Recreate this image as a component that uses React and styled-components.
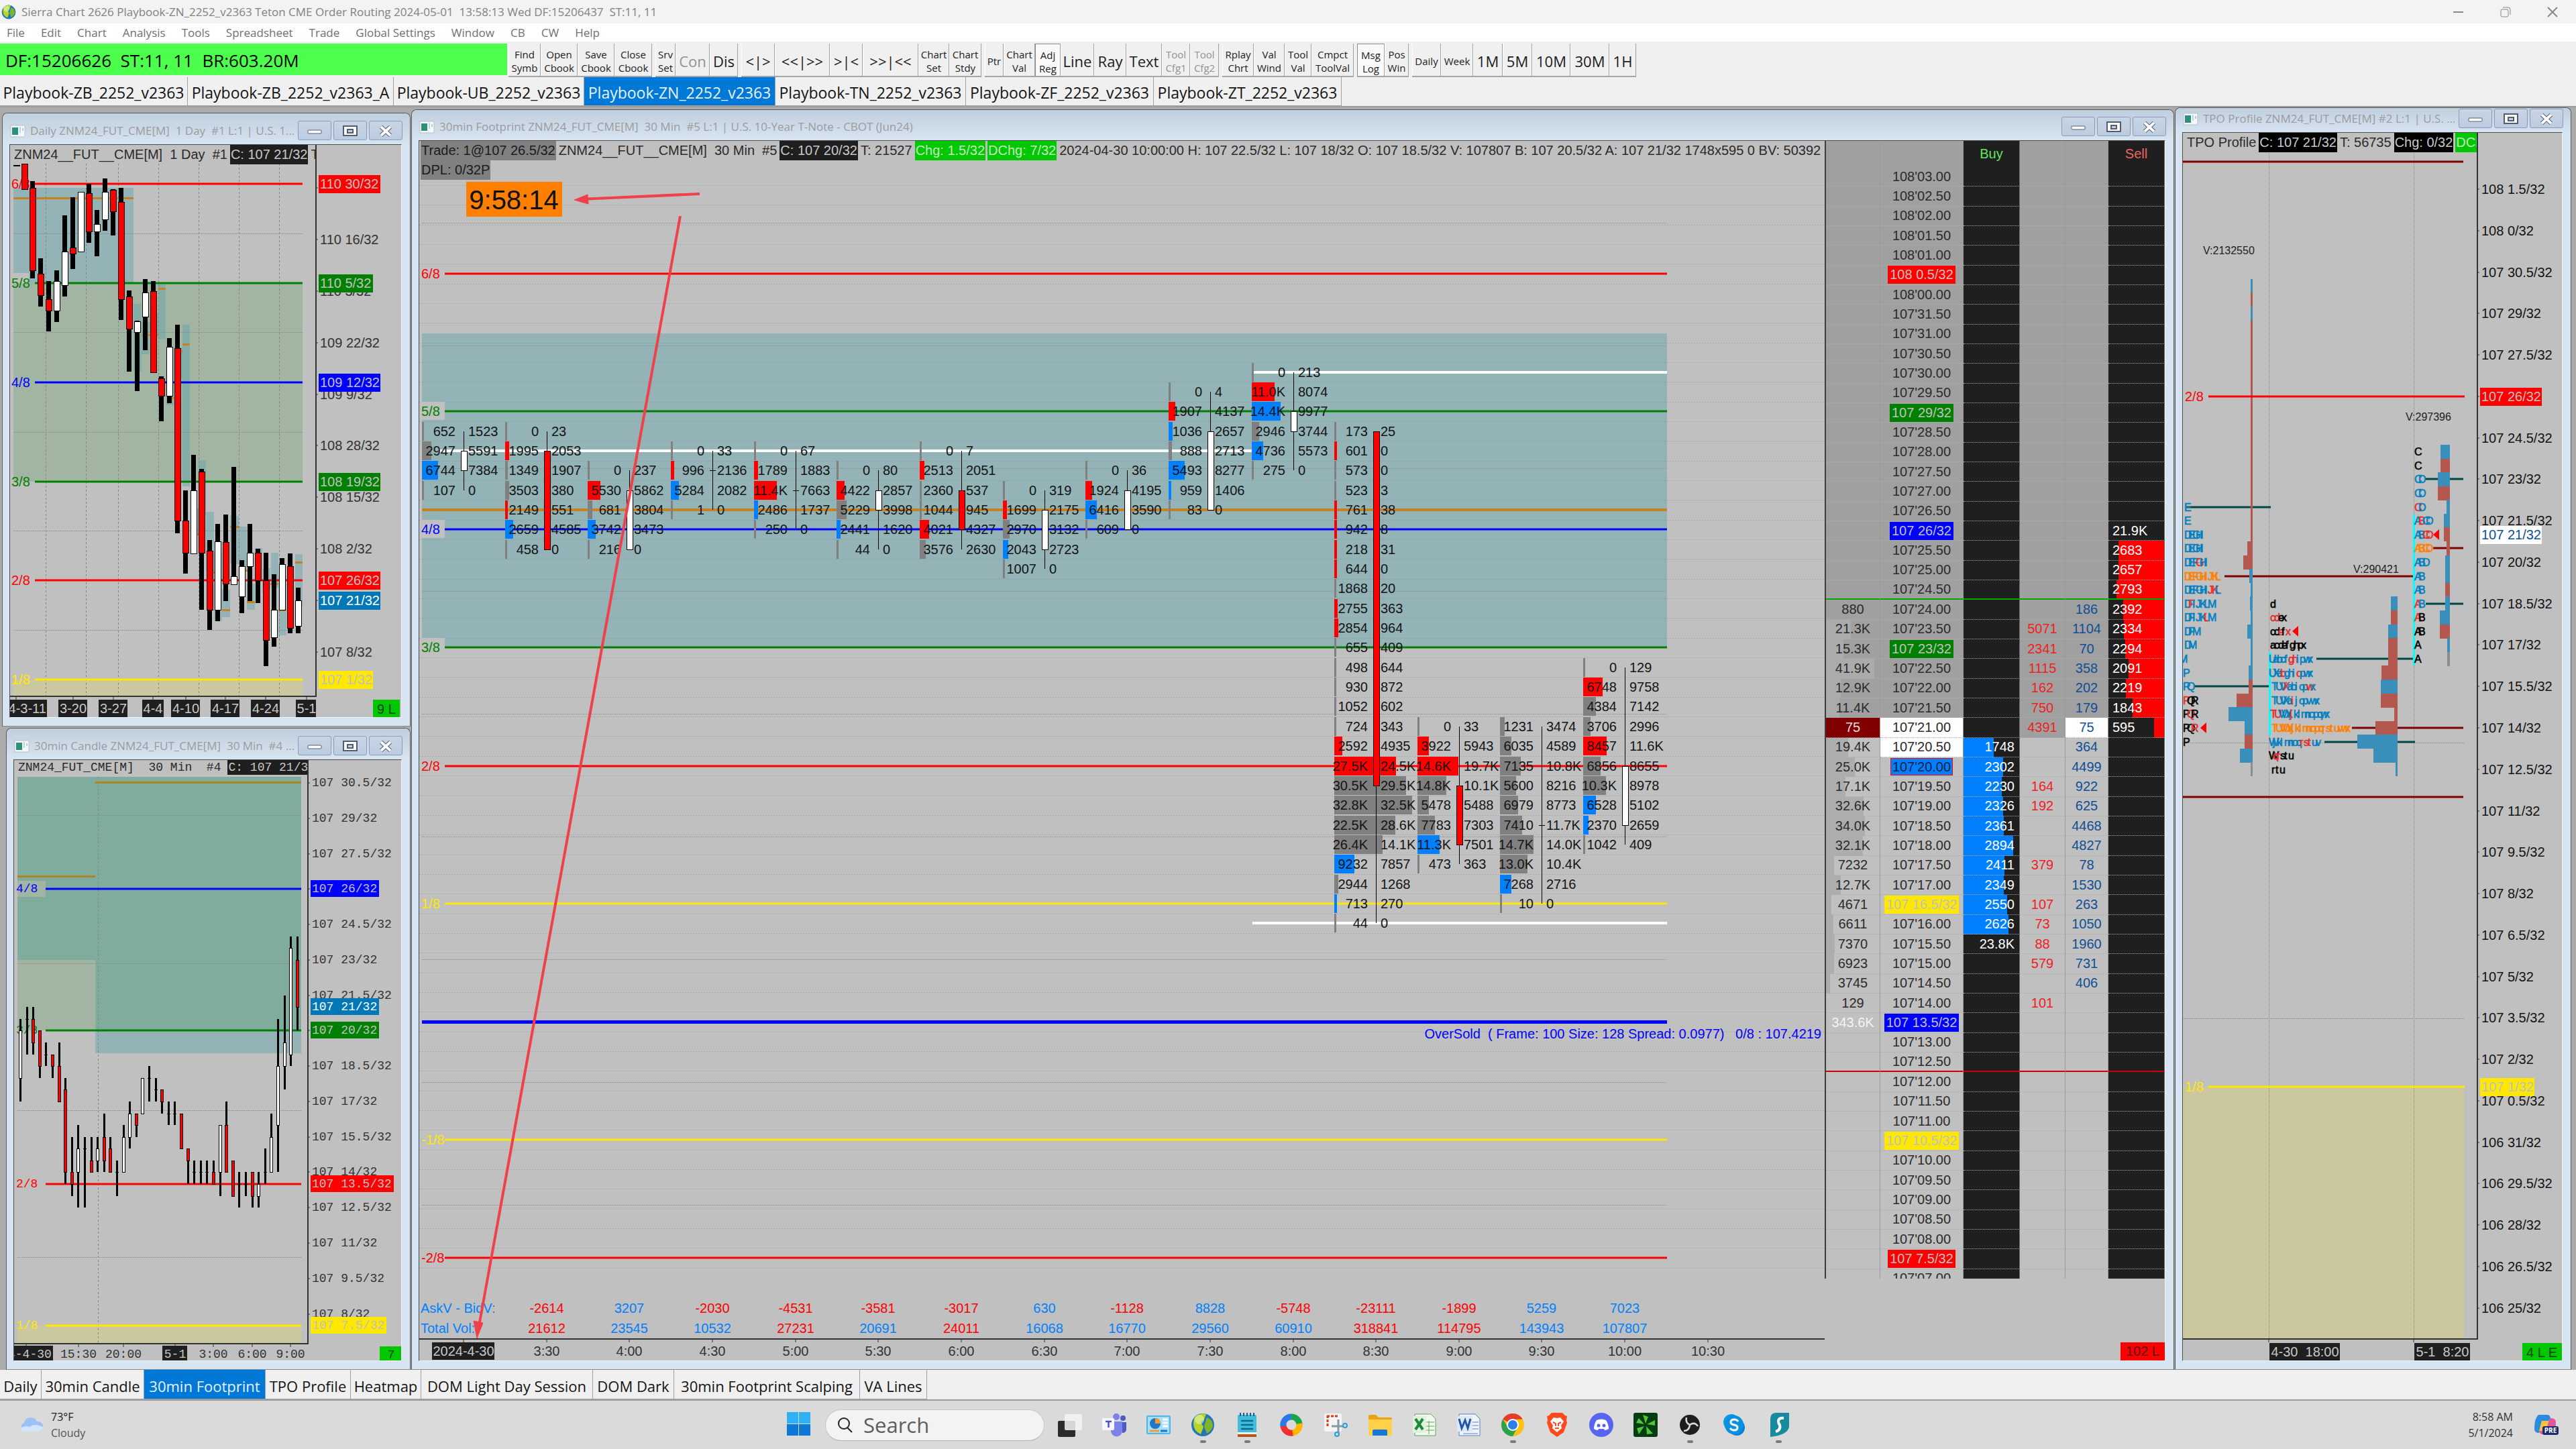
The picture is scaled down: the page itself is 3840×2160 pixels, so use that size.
import styled, { createGlobalStyle, css } from "styled-components";

const TEAL = "rgba(102, 166, 174, 0.5)";
const GREEN_ZONE = "#a2b5a2";
const YELLOW_ZONE = "#cbc79f";
const BAR_COLORS = { g: "#808080", r: "#ff0000", b: "#0080ff" };
const LEVEL = {
  red: "#ff0000",
  green: "#008000",
  blue: "#0000ff",
  yellow: "#ffe800",
};

// prices are kept in 32nds above 107
const fraction = (p) => {
  const whole = 107 + Math.floor(p / 32);
  return `${whole} ${p - (whole - 107) * 32}/32`;
};

const domPrice = (p) => {
  const whole = 107 + Math.floor(p / 32);
  return `${whole}'${(p - (whole - 107) * 32).toFixed(2).padStart(5, "0")}`;
};

const range = (count, from = 0, step = 1) =>
  Array.from({ length: count }, (_, i) => from + i * step);

const textWidth = (text, mono) =>
  mono
    ? Math.round(text.length * 11)
    : [...text].reduce((w, c) => w + (/[0-9A-Z]/.test(c) ? 11 : 6), 0);

/* ---------- data ---------- */

const MENU = [
  "File",
  "Edit",
  "Chart",
  "Analysis",
  "Tools",
  "Spreadsheet",
  "Trade",
  "Global Settings",
  "Window",
  "CB",
  "CW",
  "Help",
];

const TOOLBAR = [
  [
    ["Find\nSymb", 48],
    ["Open\nCbook", 55],
    ["Save\nCbook", 55],
    ["Close\nCbook", 56],
  ],
  [
    ["Srv\nSet", 30],
    ["Con", 51, "off"],
    ["Dis", 42],
  ],
  [
    ["<|>", 50],
    ["<<|>>", 82],
    [">|<", 49],
    [">>|<<", 83],
    ["Chart\nSet", 46],
    ["Chart\nStdy", 48],
  ],
  [
    ["Ptr", 28, "small"],
    ["Chart\nVal", 47],
    ["Adj\nReg", 38, "on"],
    ["Line", 50],
    ["Ray", 48],
    ["Text", 53],
    ["Tool\nCfg1", 42, "off"],
    ["Tool\nCfg2", 43, "off"],
  ],
  [
    ["Rplay\nChrt", 47],
    ["Val\nWind", 46],
    ["Tool\nVal", 40],
    ["Cmpct\nToolVal", 63],
  ],
  [
    ["Msg\nLog", 41, "on"],
    ["Pos\nWin", 36],
  ],
  [
    ["Daily", 43, "small"],
    ["Week", 48, "small"],
    ["1M", 44],
    ["5M", 44],
    ["10M", 57],
    ["30M", 58],
    ["1H", 40],
  ],
];

const BOOKS = [
  ["Playbook-ZB_2252_v2363", 280],
  ["Playbook-ZB_2252_v2363_A", 307],
  ["Playbook-UB_2252_v2363", 284],
  ["Playbook-ZN_2252_v2363", 285],
  ["Playbook-TN_2252_v2363", 284],
  ["Playbook-ZF_2252_v2363", 280],
  ["Playbook-ZT_2252_v2363", 280],
];

const SHEETS = [
  ["Daily", 62],
  ["30min Candle", 153],
  ["30min Footprint", 181],
  ["TPO Profile", 127],
  ["Heatmap", 105],
  ["DOM Light Day Session", 256],
  ["DOM Dark", 121],
  ["30min Footprint Scalping", 277],
  ["VA Lines", 100],
];

// [high, body top, body bottom, low, colour]
const DAILY = [
  [30, 30, 31, 31, "r"],
  [28, 28, 66, 66, "r"],
  [54, 64, 187, 199, "r"],
  [169, 192, 224, 241, "r"],
  [203, 230, 247, 278, "r"],
  [187, 203, 247, 264, "w"],
  [105, 159, 209, 226, "w"],
  [78, 153, 162, 185, "r"],
  [70, 70, 159, 160, "w"],
  [58, 72, 129, 146, "r"],
  [97, 118, 129, 166, "w"],
  [50, 70, 111, 128, "w"],
  [66, 67, 99, 135, "r"],
  [64, 85, 230, 261, "r"],
  [217, 226, 274, 338, "r"],
  [262, 263, 279, 367, "w"],
  [200, 220, 256, 306, "w"],
  [203, 218, 339, 339, "r"],
  [345, 348, 374, 412, "r"],
  [288, 301, 374, 385, "w"],
  [268, 303, 560, 579, "r"],
  [515, 560, 608, 639, "r"],
  [462, 515, 609, 609, "w"],
  [483, 487, 608, 693, "r"],
  [589, 605, 693, 723, "r"],
  [565, 591, 693, 710, "w"],
  [551, 592, 654, 680, "r"],
  [480, 643, 655, 656, "w"],
  [619, 628, 673, 698, "w"],
  [565, 608, 628, 680, "w"],
  [602, 608, 649, 683, "r"],
  [608, 649, 738, 777, "r"],
  [640, 693, 734, 748, "w"],
  [616, 625, 693, 693, "w"],
  [609, 628, 720, 728, "r"],
  [660, 679, 717, 728, "w"],
];

const DAILY_ZONES = [
  [5, 64, 23, 127],
  [28, 64, 156, 142],
  [184, 237, 12, 101],
  [196, 264, 12, 48],
  [208, 252, 13, 30],
  [221, 208, 11, 82],
  [233, 355, 11, 33],
  [244, 302, 13, 47],
  [257, 268, 11, 241],
  [273, 542, 8, 38],
  [281, 470, 11, 81],
  [292, 547, 12, 89],
  [304, 607, 12, 103],
  [316, 663, 12, 41],
  [328, 553, 13, 72],
  [341, 569, 12, 67],
  [353, 654, 12, 39],
  [365, 601, 11, 30],
  [376, 631, 12, 35],
  [389, 608, 11, 52],
  [400, 642, 12, 89],
  [425, 610, 11, 79],
];

const DAILY_MARKS = [
  [5, 79, 179],
  [196, 283, 25],
  [221, 214, 11],
  [239, 377, 6],
  [253, 307, 4],
  [257, 297, 11],
  [277, 580, 4],
  [288, 493, 4],
  [300, 637, 5],
  [316, 693, 12],
  [328, 569, 13],
  [348, 634, 6],
  [353, 681, 12],
  [388, 654, 12],
  [400, 693, 12],
  [425, 622, 11],
];

const CANDLES = [
  [20.5, 20, 18, 17, "w"],
  [21, 20.5, 20.5, 19],
  [21, 20.5, 19.5, 19, "r"],
  [20, 20, 18.5, 18, "r"],
  [19.5, 19, 19, 18.5],
  [19, 19, 18.5, 18, "r"],
  [19.5, 18.5, 17, 17, "r"],
  [18, 17.5, 14, 13.5, "r"],
  [15.5, 14, 13.5, 13, "r"],
  [16, 15, 14, 12.5, "w"],
  [15.5, 15, 15, 12.5],
  [15.5, 14.5, 14, 14, "r"],
  [15.5, 15, 14.5, 14, "w"],
  [16.5, 15.5, 14.5, 14, "r"],
  [15.5, 15, 14, 14, "r"],
  [14.5, 14, 14, 13],
  [16, 15.5, 14, 14, "w"],
  [17, 16.5, 15.5, 15, "w"],
  [16.5, 16.5, 16, 15.5, "r"],
  [18, 18, 16.5, 16.5, "w"],
  [18.5, 18, 18, 17],
  [18, 17.5, 17.5, 17],
  [17.5, 17.5, 17, 16.5, "r"],
  [17, 16.5, 16.5, 16],
  [17, 16.5, 16.5, 16],
  [16.5, 16.5, 15, 15, "r"],
  [15, 15, 14.5, 13.5, "r"],
  [14.5, 14, 14, 13.5],
  [14.5, 14, 14, 13.5],
  [14.5, 14, 14, 13.5],
  [14.5, 14, 13.5, 13.5, "r"],
  [16, 16, 14, 13, "w"],
  [17, 16, 14, 14, "r"],
  [14.5, 14.5, 13, 13, "r"],
  [14, 13.5, 13.5, 12.5],
  [14, 13.5, 13.5, 13],
  [14, 14, 13, 12.5, "r"],
  [14, 13.5, 13, 12.5, "w"],
  [15, 14, 14, 13.5],
  [16.5, 15.5, 14, 14, "w"],
  [20.5, 18.5, 16, 14, "w"],
  [21.5, 19.5, 18.5, 17.5, "w"],
  [24, 23.5, 19, 18.5, "w"],
  [24, 23, 21, 20, "r"],
];

// each row: "bid ask colour width"
const FOOTPRINT = [
  {
    time: "",
    top: 28.5,
    body: [28, 27.5, "w"],
    rows: ["652 1523", "2947 5591 g 14", "6744 7384 b 24", "107 0"],
  },
  {
    time: "3:30",
    delta: -2614,
    vol: "21612",
    top: 28.5,
    body: [28, 25.5, "r"],
    rows: [
      "0 23",
      "1995 2053 r 6",
      "1349 1907 g 4",
      "3503 380 g 6",
      "2149 551 r 4",
      "2659 4585 b 12",
      "458 0",
    ],
  },
  {
    time: "4:00",
    delta: 3207,
    vol: "23545",
    top: 27.5,
    body: [27, 25.5, "w"],
    rows: ["0 237", "5530 5862 r 19", "681 3804 g 7", "3742 3473 b 12", "216 0"],
  },
  {
    time: "4:30",
    delta: -2030,
    vol: "10532",
    volUp: true,
    top: 28,
    body: [27.5, 27.5],
    rows: ["0 33", "996 2136 r 5", "5284 2082 b 12", "1 0"],
  },
  {
    time: "5:00",
    delta: -4531,
    vol: "27231",
    top: 28,
    body: [27, 27],
    rows: ["0 67", "1789 1883 r 6", "11.4K 7663 r 34", "2486 1737 b 6", "250 0"],
  },
  {
    time: "5:30",
    delta: -3581,
    vol: "20691",
    volUp: true,
    top: 27.5,
    body: [27, 26.5, "w"],
    rows: ["0 80", "4422 2857 r 12", "5229 3998 g 15", "2441 1620 b 6", "44 0"],
  },
  {
    time: "6:00",
    delta: -3017,
    vol: "24011",
    top: 28,
    body: [27, 26, "r"],
    rows: [
      "0 7",
      "2513 2051 r 7",
      "2360 537",
      "1044 945",
      "4021 4327 r 14",
      "3576 2630 g 9",
    ],
  },
  {
    time: "6:30",
    delta: 630,
    vol: "16068",
    top: 27,
    body: [26.5, 25.5, "w"],
    rows: ["0 319", "1699 2175 r 6", "2970 3132 g 10", "2043 2723 b 8", "1007 0"],
  },
  {
    time: "7:00",
    delta: -1128,
    vol: "16770",
    volUp: true,
    top: 27.5,
    body: [27, 26, "w"],
    rows: ["0 36", "1924 4195 r 10", "6416 3590 b 17", "609 0"],
  },
  {
    time: "7:30",
    delta: 8828,
    vol: "29560",
    top: 29.5,
    body: [28.5, 26.5, "w"],
    rows: [
      "0 4",
      "1907 4137 r 10",
      "1036 2657 b 6",
      "888 2713 g 5",
      "5493 8277 b 24",
      "959 1406 b 4",
      "83 0",
    ],
  },
  {
    time: "8:00",
    delta: -5748,
    vol: "60910",
    volUp: true,
    top: 30,
    body: [29, 28.5, "w"],
    rows: [
      "0 213",
      "11.0K 8074 r 34",
      "14.4K 9977 b 43",
      "2946 3744 g 11",
      "4736 5573 b 17",
      "275 0",
    ],
  },
  {
    time: "8:30",
    delta: -23111,
    vol: "318841",
    top: 28.5,
    body: [28.5, 19.5, "r"],
    rows: [
      "173 25",
      "601 0 r 4",
      "573 0",
      "523 3",
      "761 38 r 4",
      "942 8 r 4",
      "218 31 r 4",
      "644 0 r 4",
      "1868 20",
      "2755 363 r 5",
      "2854 964 r 6",
      "655 409",
      "498 644",
      "930 872",
      "1052 602",
      "724 343",
      "2592 4935 r 12",
      "27.5K 24.5K r 92",
      "30.5K 29.5K g 107",
      "32.8K 32.5K g 116",
      "22.5K 28.6K g 91",
      "26.4K 14.1K g 72",
      "9232 7857 b 30",
      "2944 1268 g 6",
      "713 270 b 4",
      "44 0",
    ],
  },
  {
    time: "9:00",
    delta: -1899,
    vol: "114795",
    top: 21,
    body: [19.5, 18, "r"],
    rows: [
      "0 33",
      "3922 5943 r 17",
      "14.6K 19.7K r 61",
      "14.8K 10.1K g 43",
      "5478 5488 g 17",
      "7783 7303 g 26",
      "11.3K 7501 b 33",
      "473 363",
    ],
  },
  {
    time: "9:30",
    delta: 5259,
    vol: "143943",
    top: 21,
    body: [18.5, 18.5],
    rows: [
      "1231 3474 g 7",
      "6035 4589 g 17",
      "7135 10.8K g 31",
      "5600 8216 g 24",
      "6979 8773 g 27",
      "7410 11.7K g 33",
      "14.7K 14.0K g 50",
      "13.0K 10.4K g 41",
      "7268 2716 b 17",
      "10 0",
    ],
  },
  {
    time: "10:00",
    delta: 7023,
    vol: "107807",
    top: 22.5,
    body: [20, 18.5, "w"],
    rows: [
      "0 129",
      "6748 9758 r 29",
      "4384 7142 g 19",
      "3706 2996 g 11",
      "8457 11.6K r 35",
      "6856 8655 g 26",
      "10.3K 8978 g 34",
      "6528 5102 b 19",
      "2370 2659 b 8",
      "1042 409",
    ],
  },
];

const MURREY = [
  ["6/8", 32.5, "red"],
  ["5/8", 29, "green"],
  ["4/8", 26, "blue"],
  ["3/8", 23, "green"],
  ["2/8", 20, "red"],
  ["1/8", 16.5, "yellow"],
  ["-1/8", 10.5, "yellow"],
  ["-2/8", 7.5, "red"],
];

const DOM_TAGS = {
  32.5: "red",
  29: "green",
  26: "blue",
  23: "green",
  16.5: "yellow",
  13.5: "blue",
  10.5: "yellow",
  7.5: "red",
};

// price: [volume, buy, bid traded, ask traded, sell]
const DOM = {
  26: ["", "", "", "", "21.9K"],
  25.5: ["", "", "", "", "2683"],
  25: ["", "", "", "", "2657"],
  24.5: ["", "", "", "", "2793"],
  24: ["880", "", "", "186", "2392"],
  23.5: ["21.3K", "", "5071", "1104", "2334"],
  23: ["15.3K", "", "2341", "70", "2294"],
  22.5: ["41.9K", "", "1115", "358", "2091"],
  22: ["12.9K", "", "162", "202", "2219"],
  21.5: ["11.4K", "", "750", "179", "1843"],
  21: ["75", "", "4391", "75", "595"],
  20.5: ["19.4K", "1748", "", "364", ""],
  20: ["25.0K", "2302", "", "4499", ""],
  19.5: ["17.1K", "2230", "164", "922", ""],
  19: ["32.6K", "2326", "192", "625", ""],
  18.5: ["34.0K", "2361", "", "4468", ""],
  18: ["32.1K", "2894", "", "4827", ""],
  17.5: ["7232", "2411", "379", "78", ""],
  17: ["12.7K", "2349", "", "1530", ""],
  16.5: ["4671", "2550", "107", "263", ""],
  16: ["6611", "2626", "73", "1050", ""],
  15.5: ["7370", "23.8K", "88", "1960", ""],
  15: ["6923", "", "579", "731", ""],
  14.5: ["3745", "", "", "406", ""],
  14: ["129", "", "101", "", ""],
  13.5: ["343.6K", "", "", "", ""],
};

const TPO_COLORS = { k: "#000000", b: "#0080c0", r: "#e03030", o: "#ff8000" };

// x, price, letters, colour of each letter
const TPO_ROWS = [
  [2, 22, "E", "b"],
  [2, 21.5, "E", "b"],
  [2, 21, "DEGHI", "bbbbb"],
  [2, 20.5, "DEGHI", "bbbbb"],
  [2, 20, "DEFGHI", "bbbrbb"],
  [2, 19.5, "DEFGHIJKL", "ooooooooo"],
  [2, 19, "DEFGHIJKL", "bbbbbbrrb"],
  [2, 18.5, "DFIJKLM", "brbbbbb"],
  [2, 18, "DFIJKLM", "bbbbbrb"],
  [2, 17.5, "DFM", "bbb"],
  [2, 17, "DM", "bb"],
  [-6, 16.5, "M", "b"],
  [0, 16, "P", "b"],
  [0, 15.5, "RQ", "bb"],
  [0, 15, "PQR", "rkk"],
  [0, 14.5, "PQR", "krk"],
  [0, 14, "PQR", "kkr"],
  [0, 13.5, "P", "k"],
  [130, 18.5, "d", "k"],
  [130, 18, "cdex", "rrkk"],
  [130, 17.5, "cdefx", "kkrkr"],
  [130, 17, "acdefghpx", "kkkkkkkkk"],
  [128, 16.5, "Uabcfghipwx", "bbbbbrrbbbb"],
  [128, 16, "UXabghiopwx", "bbbrbbbrbbb"],
  [132, 15.5, "TUVXabiopwx", "bbbrbbbbbrb"],
  [132, 15, "TUVXaijopvwx", "bbbbbrbbbbbb"],
  [130, 14.5, "TUVWXjklmnopqwx", "rrbbbrbbbbbbbbb"],
  [132, 14, "TUVWXjklmnopqrstuvwx", "oooooooooooooooooooo"],
  [128, 13.5, "Wjklmnoqrstuv", "bbbbbbbbrrrbb"],
  [128, 13, "Wqrstu", "krrkkk"],
  [132, 12.5, "rtu", "kkk"],
  [345, 24, "C", "k"],
  [345, 23.5, "C", "k"],
  [345, 23, "CD", "bb"],
  [345, 22.5, "CD", "bb"],
  [345, 22, "CD", "rb"],
  [345, 21.5, "ABCD", "brbb"],
  [345, 21, "ABCD", "bbrr"],
  [345, 20.5, "ABCD", "oooo"],
  [345, 20, "ABD", "bbb"],
  [345, 19.5, "AB", "bb"],
  [345, 19, "AB", "bb"],
  [345, 18.5, "AB", "rb"],
  [345, 18, "AB", "rk"],
  [345, 17.5, "AB", "kk"],
  [345, 17, "A", "k"],
  [345, 16.5, "A", "k"],
];

const PROFILES = [
  {
    right: 104,
    top: 30,
    rows:
      "b3 r3 b3 r3 r3 r3 r3 r3 r3 r3 r3 r3 r3 r3 r3 r3 r3 r3 r3 r8 r14 b5 b3 b4 b3 b8 b3 b3 b6 r6 r24 b36 b12 r12 b19 g3",
  },
  {
    right: 320,
    top: 18.5,
    rows: "b10 r10 b14 r14 r14 r24 b25 r25 r5 r33 b60 b36 b3",
  },
  {
    right: 398,
    top: 24,
    rows: "b14 r14 b18 r18 b5 b9 r9 r5 b7 b7 r7 b7 b15 r15 b4 g4",
  },
];

/* ---------- styled parts ---------- */

const GlobalStyle = createGlobalStyle`
  * {
    box-sizing: border-box;
  }
  body {
    margin: 0;
    background: #ababab;
    font-family: "Open Sans", sans-serif;
  }
  button {
    font: inherit;
    color: inherit;
    padding: 0;
    border: none;
    background: none;
  }
`;

const Screen = styled.div`
  display: flex;
  flex-direction: column;
  min-height: 100vh;
  overflow: hidden;
`;

const TitleBar = styled.header`
  display: flex;
  align-items: center;
  height: 35px;
  padding: 0 24px 0 2px;
  gap: 8px;
  background: #f3f3f3;
  color: #828282;
  font-size: 17px;
  white-space: pre;
`;

const WindowKeys = styled.div`
  display: flex;
  gap: 48px;
  margin-left: auto;

  button {
    width: 22px;
    height: 20px;
  }
`;

const MenuBar = styled.nav`
  display: flex;
  align-items: center;
  height: 27px;
  padding-left: 10px;
  gap: 24px;
  background: #ffffff;
  color: #6f6f6f;
  font-size: 17px;
  line-height: 24px;
`;

const ToolBar = styled.div`
  display: flex;
  height: 53px;
  padding-top: 3px;
  gap: 5px;
  background: #f0f0f0;
`;

const Status = styled.div`
  width: 756px;
  height: 47px;
  margin-right: -3px;
  padding-left: 8px;
  background: #4dff4d;
  font-size: 26px;
  line-height: 50px;
  white-space: pre;
`;

const ToolGroup = styled.div`
  display: flex;
  height: 50px;
  border-bottom: 2px solid #a5a5a5;
`;

const ToolButton = styled.button`
  width: ${({ $width }) => $width}px;
  padding-top: 4px;
  border-right: 1px solid #a0a0a0;
  border-left: 1px solid #ffffff;
  white-space: pre;
  text-align: center;
  font-size: ${({ $size }) => $size}px;
  line-height: 20px;
  color: ${({ $state }) => ($state === "off" ? "#929292" : "#1c1c1c")};
  ${({ $state }) =>
    $state === "on" &&
    css`
      background: #f9f9f9;
      border-top: 1px solid #8c8c8c;
      border-left-color: #8c8c8c;
    `}
`;

const TabStrip = styled.nav`
  display: flex;
  flex: none;
  height: ${({ $height }) => $height}px;
  background: #f0f0f0;
  border-bottom: 2px solid #9c9c9c;
`;

const Tab = styled.button`
  width: ${({ $width }) => $width}px;
  padding-top: 4px;
  font-size: ${({ $size }) => $size || 23}px;
  white-space: nowrap;
  border-right: 1px solid #a0a0a0;
  border-bottom: 1px solid #a0a0a0;
  background: ${({ $active }) => ($active ? "#0078d7" : "#f0f0f0")};
  color: ${({ $active }) => ($active ? "#e8f2fc" : "#141414")};
`;

const Desktop = styled.main`
  flex: 1;
  display: grid;
  grid-template-columns: 612px minmax(0, 1fr) 591px;
  padding-right: 7px;
  min-height: 0;
  background: #ababab;
`;

const LeftStack = styled.div`
  display: grid;
  grid-template-rows: 915fr 957fr;
  gap: 2px;
  padding-top: 8px;
`;

const Frame = styled.section`
  display: flex;
  flex-direction: column;
  margin: ${({ $margin }) => $margin};
  padding: 0 12px 12px 10px;
  min-width: 0;
  background: #d7e4f2;
  border: 1px solid #5a5a5a;
  border-bottom-color: #8a8a8a;
  border-radius: 8px 8px 0 0;
`;

const FrameTitle = styled.div`
  display: flex;
  align-items: flex-end;
  height: ${({ $height }) => $height}px;
  margin: 0 -12px 0 -10px;
  padding: 0 14px 6px 11px;
  gap: 6px;
  border-radius: 8px 8px 0 0;
  background: linear-gradient(#c0cfdd, #d7e4f2);
  color: #9b9b9b;
  font-size: 17px;
  line-height: 28px;
  white-space: pre;

  h2 {
    flex: 1;
    min-width: 0;
    margin: 0;
    overflow: hidden;
    font: inherit;
  }
  svg {
    display: block;
  }
`;

const FrameKey = styled.button`
  width: 50px;
  height: 29px;
  margin-right: -3px;
  border: 1px solid #8b9cb8;
  border-radius: 3px;
  background: linear-gradient(#c7d5e5, #bccce0);

  svg {
    margin: auto;
  }
`;

const Client = styled.div`
  flex: 1;
  display: grid;
  grid-template-columns: ${({ $columns }) => $columns || "minmax(0, 1fr)"};
  grid-template-rows: minmax(0, 1fr);
  min-height: 0;
  overflow: hidden;
  background: #c0c0c0;
  border: 1px solid #4c4c4c;
  border-right-color: #eef3f8;
  border-bottom-color: #eef3f8;
`;

const Plot = styled.svg`
  grid-area: 1 / 1;
  display: block;
  width: 100%;
  height: 100%;
  font-family: ${({ $mono }) =>
    $mono
      ? '"Liberation Mono", monospace'
      : '"Liberation Sans", Arial, sans-serif'};
  font-size: ${({ $mono }) => ($mono ? 18 : 20)}px;

  text {
    dominant-baseline: central;
    white-space: pre;
  }
`;

const ChartHeader = styled.div`
  grid-area: 1 / 1;
  align-self: start;
  width: ${({ $width }) => $width};
  padding-left: ${({ $pad }) => $pad}px;
  overflow: hidden;
  white-space: pre;
  color: #2b2b2b;
  font-family: ${({ $mono }) =>
    $mono
      ? '"Liberation Mono", monospace'
      : '"Liberation Sans", Arial, sans-serif'};
  font-size: ${({ $mono }) => ($mono ? 18 : 20)}px;
  line-height: ${({ $mono }) => ($mono ? 22 : 29)}px;
`;

const HeaderLine = styled.div`
  display: flex;
  gap: ${({ $gap }) => $gap || 3}px;
`;

const Chip = styled.span`
  flex: none;
  padding: 0 1px;
  background: ${({ $bg }) => $bg || "none"};
  color: ${({ $color }) => $color || "inherit"};
`;

const LadderPane = styled.div`
  display: flex;
  flex-direction: column;
  min-height: 0;
  overflow: hidden;
`;

const LadderClip = styled.div`
  height: 1696px;
  overflow: hidden;
  border-left: 2px solid #3c3c3c;
`;

const Ladder = styled.table`
  display: block;
  font-family: "Liberation Sans", Arial, sans-serif;
  font-size: 20px;
  line-height: 27px;
  color: #2b2b2b;

  thead {
    display: block;
    height: 39px;
  }
  tbody {
    display: grid;
    grid-template-rows: repeat(57, minmax(0, 1fr));
    height: 1672px;
  }
`;

const LadderRow = styled.tr`
  display: grid;
  grid-template-columns: 81px 124px 84px 68px 64px 84px;
  height: 100%;
  background: ${({ $upper }) => ($upper ? "#a0a0a0" : "#c0c0c0")};
  ${({ $rule }) =>
    $rule &&
    css`
      td {
        border-bottom: 3px solid ${$rule};
      }
    `}
`;

const Cell = styled.td`
  display: flex;
  align-items: center;
  justify-content: ${({ $align }) => $align || "center"};
  padding: ${({ $pad }) => $pad || 0};
  color: ${({ $color }) => $color || "inherit"};
  border-bottom: 1px dotted ${({ $dark }) => ($dark ? "#a8a8a8" : "#aeaeae")};
  border-right: 1px solid ${({ $dark }) => ($dark ? "#6a6a6a" : "#999999")};
  background: ${({ $dark, $bg }) => ($dark ? "#1f1f1f" : $bg || "none")};
`;

const HeadCell = styled(Cell).attrs({ as: "th" })`
  font-weight: normal;
  border-bottom: none;
`;

const PriceTag = styled.span`
  padding: 0 3px;
  background: ${({ $bg }) => $bg};
  color: #c0c0c0;
`;

const LastPrice = styled.span`
  padding: 0 2px;
  line-height: 24px;
  background: #0080ff;
  border: 1px solid #ff0000;
  color: #10203c;
`;

const LadderFoot = styled.div`
  display: flex;
  flex: 1;
  align-items: flex-end;
  justify-content: flex-end;

  span {
    padding: 0 8px;
    background: #ff0000;
    color: #5a1010;
    font: 20px/27px "Liberation Sans", Arial, sans-serif;
  }
`;

const TaskBar = styled.footer`
  display: grid;
  grid-template-columns: 1fr auto 1fr;
  align-items: center;
  height: 72px;
  padding: 0 26px 0 32px;
  background: #dadada;
`;

const Weather = styled.div`
  display: flex;
  align-items: center;
  gap: 10px;
  margin-left: -4px;
  font-size: 16px;
  line-height: 24px;
  color: #555555;

  strong {
    display: block;
    font-weight: normal;
    color: #1c1c1c;
  }
`;

const Apps = styled.div`
  display: flex;
  align-items: center;
  gap: 22px;
`;

const SearchBox = styled.label`
  display: flex;
  align-items: center;
  width: 327px;
  height: 47px;
  margin-right: -6px;
  padding: 0 16px;
  gap: 14px;
  background: #f3f3f3;
  border: 1px solid #c6c6c6;
  border-bottom-color: #b0b0b0;
  border-radius: 24px;

  input {
    min-width: 0;
    flex: 1;
    border: none;
    outline: none;
    background: none;
    font: 31px "Open Sans", sans-serif;
    color: #5e5e5e;
  }
  input::placeholder {
    color: #5e5e5e;
    opacity: 1;
  }
`;

const AppButton = styled.button`
  display: flex;
  flex-direction: column;
  align-items: center;
  justify-content: flex-end;
  width: 44px;
  height: 60px;
  padding-bottom: 3px;

  &::after {
    content: "";
    width: 9px;
    height: 4px;
    margin-top: 5px;
    border-radius: 2px;
    background: ${({ $open }) => ($open ? "#7a7a7a" : "transparent")};
  }
  svg {
    display: block;
  }
`;

const Tray = styled.div`
  display: flex;
  align-items: center;
  justify-content: flex-end;
  gap: 30px;
  text-align: right;
  font-size: 16px;
  line-height: 24px;
  color: #333333;
`;

/* ---------- shared chart pieces ---------- */

const Dots = ({ xs = [], ys = [], box, color = "#858585", dash = "2 2" }) => {
  const [left, top, right, bottom] = box;
  return (
    <g stroke={color} strokeDasharray={dash} shapeRendering="crispEdges">
      {xs.map((x) => (
        <line key={`x${x}`} x1={x} x2={x} y1={top} y2={bottom} />
      ))}
      {ys.map((y) => (
        <line key={`y${y}`} x1={left} x2={right} y1={y} y2={y} />
      ))}
    </g>
  );
};

const Candle = ({ x, high, top, bottom, low, color, body, wick }) => {
  const left = x - Math.floor(body / 2);
  return (
    <g shapeRendering="crispEdges">
      <rect
        x={x - Math.floor(wick / 2)}
        y={high}
        width={wick}
        height={Math.max(low - high, 1)}
        fill="#000"
      />
      {color ? (
        <rect
          x={left}
          y={top}
          width={body}
          height={Math.max(bottom - top, 1)}
          fill={color === "r" ? "#ff0000" : "#ffffff"}
          stroke="#000"
        />
      ) : (
        <line x1={left - 2} x2={left + body + 2} y1={top} y2={top} stroke="#000" />
      )}
    </g>
  );
};

const AxisTag = ({ x, y, text, bg, color = "#c0c0c0", mono }) => (
  <g>
    <rect
      x={x}
      y={y - 13}
      width={textWidth(text, mono) + 3}
      height={mono ? 25 : 27}
      fill={bg}
    />
    <text x={x + 2} y={y} fill={color}>
      {text}
    </text>
  </g>
);

const AxisLabels = ({ x, prices, yOf, color = "#333" }) => (
  <g fill={color}>
    {prices.map((p) => (
      <g key={p}>
        <line x1={x} x2={x + 3} y1={yOf(p)} y2={yOf(p)} stroke="#333" />
        <text x={x + 6} y={yOf(p)}>
          {fraction(p)}
        </text>
      </g>
    ))}
  </g>
);

const TimeLabel = ({ x, y, text, boxed, mono }) => {
  const width = textWidth(text, mono) + 4;
  return (
    <g>
      {boxed && (
        <rect
          x={x - Math.round(width / 2)}
          y={y - 13}
          width={width}
          height={26}
          fill="#1f1f1f"
        />
      )}
      <text x={x} y={y} textAnchor="middle" fill={boxed ? "#c8c8c8" : "#333"}>
        {text}
      </text>
    </g>
  );
};

const ChartWindow = ({ title, margin, titleHeight, columns, children }) => (
  <Frame $margin={margin}>
    <FrameTitle $height={titleHeight}>
      <svg width="24" height="28" viewBox="0 0 24 28">
        <rect x="1" y="6" width="21" height="17" fill="#f4f8fb" stroke="#b7bfc8" />
        <rect x="3" y="9" width="9" height="11" fill="#2f8f7c" />
        <rect x="14" y="8" width="2" height="9" fill="#b9dccd" />
        <rect x="18" y="10" width="2" height="4" fill="#b9c9dc" />
      </svg>
      <h2>{title}</h2>
      <FrameKey aria-label="Minimize">
        <svg width="24" height="18" viewBox="0 0 24 18">
          <rect x="2" y="8" width="20" height="5" rx="1" fill="#fff" stroke="#555c70" />
        </svg>
      </FrameKey>
      <FrameKey aria-label="Maximize">
        <svg width="24" height="18" viewBox="0 0 24 18">
          <path
            d="M2 2h20v14H2zM8 7h8v5H8z"
            fill="#fff"
            fillRule="evenodd"
            stroke="#555c70"
            strokeWidth="2"
          />
        </svg>
      </FrameKey>
      <FrameKey aria-label="Close">
        <svg width="24" height="18" viewBox="0 0 24 18">
          <path d="M5 3l14 13M19 3L5 16" stroke="#555c70" strokeWidth="6" />
          <path d="M5 3l14 13M19 3L5 16" stroke="#fff" strokeWidth="4" />
        </svg>
      </FrameKey>
    </FrameTitle>
    <Client $columns={columns}>{children}</Client>
  </Frame>
);

/* ---------- charts ---------- */

const DailyChart = () => {
  const yOf = (p) => Math.round(141 + (112 - p) * 5.912);
  const levels = [
    ["6/8", 126, "red"],
    ["5/8", 101, "green"],
    ["4/8", 76, "blue"],
    ["3/8", 51, "green"],
    ["2/8", 26, "red"],
    ["1/8", 1, "yellow"],
  ];
  const dates = [
    ["2024-3-11", 9],
    ["3-20", 94],
    ["3-27", 154],
    ["4-4", 213],
    ["4-10", 262],
    ["4-17", 321],
    ["4-24", 381],
    ["5-1", 442],
  ];
  return (
    <ChartWindow
      title="Daily ZNM24_FUT_CME[M]  1 Day  #1 L:1 | U.S. 1..."
      margin="0 0 0 3px"
      titleHeight={46}
    >
      <Plot>
        <rect x="5" y={yOf(101)} width="431" height={yOf(51) - yOf(101)} fill={GREEN_ZONE} />
        <rect x="5" y={yOf(1)} width="431" height={822 - yOf(1)} fill={YELLOW_ZONE} />
        {DAILY_ZONES.map(([x, y, w, h]) => (
          <rect key={x} x={x} y={y} width={w} height={h} fill={TEAL} />
        ))}
        <Dots
          xs={[53, 113, 161, 221, 281, 341, 401]}
          box={[5, 28, 436, 822]}
          dash="3 3"
        />
        <Dots ys={[132, 279, 428, 575, 723]} box={[5, 28, 436, 822]} dash="1 1" />
        {DAILY_MARKS.map(([x, y, w]) => (
          <rect key={`${x}-${y}`} x={x} y={y - 1} width={w} height="3" fill="#c6821f" />
        ))}
        {levels.map(([name, p, color]) => (
          <g key={name}>
            <line x1="37" x2="436" y1={yOf(p)} y2={yOf(p)} stroke={LEVEL[color]} strokeWidth="3" />
            <text x="2" y={yOf(p)} fill={LEVEL[color]}>
              {name}
            </text>
          </g>
        ))}
        {DAILY.map(([high, top, bottom, low, color], i) => (
          <Candle
            key={i}
            x={9 + i * 12}
            high={high}
            top={top}
            bottom={bottom}
            low={low}
            color={color}
            body={9}
            wick={7}
          />
        ))}
        <path d="M456 0V822H0" fill="none" stroke="#333" strokeWidth="2" />
        <AxisLabels x={456} prices={range(10, 125, -13)} yOf={yOf} />
        {levels.map(([name, p, color]) => (
          <AxisTag key={name} x={460} y={yOf(p)} text={fraction(p)} bg={LEVEL[color]} />
        ))}
        <AxisTag x={460} y={yOf(21)} text="107 21/32" bg="#0078b8" color="#fff" />
        <svg width="456" height="100%">
          {dates.map(([text, x]) => (
            <g key={text}>
              <line x1={x} x2={x} y1="822" y2="828" stroke="#333" />
              <TimeLabel x={x} y={840} text={text} boxed />
            </g>
          ))}
        </svg>
        <rect x="541" y="827" width="40" height="27" fill="#00c800" />
        <text x="561" y="841" textAnchor="middle" fill="#124012">
          9 L
        </text>
      </Plot>
      <ChartHeader $width="455px" $pad={5}>
        <HeaderLine>
          <Chip>ZNM24__FUT__CME[M]  1 Day  #1</Chip>
          <Chip $bg="#1f1f1f" $color="#c8c8c8">
            C: 107 21/32
          </Chip>
          <Chip>T: 56735</Chip>
        </HeaderLine>
      </ChartHeader>
    </ChartWindow>
  );
};

const CandleChart = () => {
  const yOf = (p) => Math.round(34 + (30.5 - p) * 35.18);
  const levels = [
    ["4/8", 26, "blue"],
    ["3/8", 20, "green"],
    ["2/8", 13.5, "red"],
    ["1/8", 7.5, "yellow"],
  ];
  const times = [
    ["24-4-30", 18, true],
    ["15:30", 96],
    ["20:00", 163],
    ["5-1", 240, true],
    ["3:00", 297],
    ["6:00", 355],
    ["9:00", 412],
  ];
  return (
    <ChartWindow
      title="30min Candle ZNM24_FUT_CME[M]  30 Min  #4 ..."
      margin="0 0 0 9px"
      titleHeight={46}
    >
      <Plot $mono>
        <rect x="5" y="25" width="423" height="378" fill={GREEN_ZONE} />
        <rect x="5" y="25" width="116" height="273" fill="#7fac9c" />
        <rect x="121" y="25" width="307" height="378" fill="#7fac9c" />
        <rect x="121" y="403" width="307" height="34" fill="#93b3b7" />
        <rect x="5" y={yOf(7.5)} width="423" height={870 - yOf(7.5)} fill={YELLOW_ZONE} />
        <rect x="5" y={yOf(26) - 12} width="42" height="24" fill={GREEN_ZONE} />
        <Dots xs={[125]} box={[5, 25, 428, 870]} dash="3 3" />
        <Dots ys={[82, 303, 522, 741]} box={[5, 25, 428, 870]} dash="1 1" />
        <rect x="5" y="172" width="116" height="3" fill="#ac8423" />
        <rect x="121" y="32" width="307" height="3" fill="#ac8423" />
        {levels.map(([name, p, color]) => (
          <g key={name}>
            <line x1="47" x2="428" y1={yOf(p)} y2={yOf(p)} stroke={LEVEL[color]} strokeWidth="3" />
            <text x="3" y={yOf(p)} fill={LEVEL[color]}>
              {name}
            </text>
          </g>
        ))}
        {CANDLES.map(([high, top, bottom, low, color], i) => (
          <Candle
            key={i}
            x={Math.round(9 + i * 9.6)}
            high={yOf(high)}
            top={yOf(top)}
            bottom={yOf(bottom)}
            low={yOf(low)}
            color={color}
            body={color ? 4 : 1}
            wick={3}
          />
        ))}
        <path d="M438 0V870H0" fill="none" stroke="#333" strokeWidth="2" />
        <AxisLabels x={438} prices={range(16, 30.5, -1.5)} yOf={yOf} />
        {levels.map(([name, p, color]) => (
          <AxisTag key={name} x={442} y={yOf(p)} text={fraction(p)} bg={LEVEL[color]} mono />
        ))}
        <AxisTag x={442} y={yOf(21)} text="107 21/32" bg="#0078b8" color="#fff" mono />
        {times.map(([text, x, boxed]) => (
          <g key={text}>
            <line x1={x} x2={x} y1="870" y2="875" stroke="#333" />
            <TimeLabel x={x} y={886} text={text} boxed={boxed} mono />
          </g>
        ))}
        <rect x="545" y="874" width="34" height="24" fill="#00c800" />
        <text x="562" y="887" textAnchor="middle" fill="#124012">
          7
        </text>
      </Plot>
      <ChartHeader $width="437px" $pad={5} $mono>
        <HeaderLine $gap={9}>
          <Chip>ZNM24_FUT_CME[M]  30 Min  #4</Chip>
          <Chip $bg="#1f1f1f" $color="#c8c8c8">
            C: 107 21/32
          </Chip>
        </HeaderLine>
      </ChartHeader>
    </ChartWindow>
  );
};

const FootprintBar = ({ bar, x, yOf }) => {
  const rows = bar.rows.map((row) => row.split(" "));
  const [open, close, color] = bar.body;
  return (
    <g>
      {rows.map(([, , tone = "g", width = 3], i) => (
        <rect
          key={i}
          x={x - 62}
          y={yOf(bar.top - i * 0.5) - 14}
          width={width}
          height="28"
          fill={BAR_COLORS[tone]}
        />
      ))}
      {rows.map(([bid, ask], i) => (
        <g key={i} fill="#141414">
          <text x={x - 12} y={yOf(bar.top - i * 0.5)} textAnchor="end">
            {bid}
          </text>
          <text x={x + 7} y={yOf(bar.top - i * 0.5)}>
            {ask}
          </text>
        </g>
      ))}
      <Candle
        x={x}
        high={yOf(bar.top)}
        top={yOf(open)}
        bottom={yOf(close)}
        low={yOf(bar.top - (rows.length - 1) * 0.5)}
        color={color}
        body={color ? 9 : 5}
        wick={1}
      />
    </g>
  );
};

const FootprintPlot = () => {
  const yOf = (p) => Math.round(198 + (32.5 - p) * 58.68);
  const xOf = (i) => Math.round(66 + i * 123.65);
  const tone = (up) => (up ? "#0080ff" : "#ff0000");
  return (
    <Plot>
      <rect x="4" y="287" width="1856" height="469" fill="#93b3b7" />
      <Dots
        ys={range(56, 34.75, -0.5).map(yOf)}
        box={[0, 58, 2095, 1786]}
        color="rgba(120,120,120,0.3)"
        dash="2 2"
      />
      <Dots
        ys={range(9, 122, 183)}
        box={[4, 58, 1860, 1786]}
        color="#8a8a8a"
        dash="1 1"
      />
      <rect x="4" y={yOf(26.5) - 2} width="1856" height="4" fill="#c6821f" />
      <rect x="28" y={yOf(28) - 2} width="1214" height="4" fill="#fff" />
      <rect x="1244" y={yOf(30) - 2} width="616" height="4" fill="#fff" />
      <rect x="1242" y={yOf(16) - 2} width="618" height="4" fill="#fff" />
      {MURREY.map(([name, p, color]) => (
        <g key={name}>
          <line x1="38" x2="1860" y1={yOf(p)} y2={yOf(p)} stroke={LEVEL[color]} strokeWidth="3" />
          <rect x="2" y={yOf(p) - 14} width="36" height="27" fill="#c0c0c0" />
          <text x="3" y={yOf(p)} fill={LEVEL[color]}>
            {name}
          </text>
        </g>
      ))}
      <rect x="4" y={yOf(13.5) - 2} width="1856" height="5" fill="#0000ff" />
      <text x="2090" y={yOf(13.5) + 18} textAnchor="end" fill="#0000ff">
        OverSold  ( Frame: 100 Size: 128 Spread: 0.0977)   0/8 : 107.4219
      </text>
      {FOOTPRINT.map((bar, i) => (
        <FootprintBar key={i} bar={bar} x={xOf(i)} yOf={yOf} />
      ))}
      <g fill="#0080ff">
        <text x="2" y="1740">
          AskV - BidV:
        </text>
        <text x="2" y="1770">
          Total Vol:
        </text>
      </g>
      {FOOTPRINT.slice(1).map((bar, i) => (
        <g key={bar.time} textAnchor="middle">
          <text x={xOf(i + 1)} y="1740" fill={tone(bar.delta > 0)}>
            {bar.delta}
          </text>
          <text x={xOf(i + 1)} y="1770" fill={tone(bar.delta > 0 || bar.volUp)}>
            {bar.vol}
          </text>
        </g>
      ))}
      <path d="M0 1786H2096" stroke="#333" strokeWidth="2" />
      {["2024-4-30", ...FOOTPRINT.slice(1).map((bar) => bar.time), "10:30"].map(
        (text, i) => (
          <g key={text}>
            <line x1={xOf(i)} x2={xOf(i)} y1="1786" y2="1791" stroke="#333" />
            <TimeLabel x={xOf(i)} y={1804} text={text} boxed={i === 0} />
          </g>
        )
      )}
      <rect x="70" y="61" width="143" height="52" fill="#ff8000" />
      <text x="141" y="88" textAnchor="middle" fontSize="40" fill="#101010">
        9:58:14
      </text>
      <g stroke="#f0404a" strokeWidth="4" fill="#f0404a">
        <path d="M418 79L240 87" fill="none" />
        <path d="M231 88l20 -8l1 14z" strokeWidth="1" />
        <path d="M389 112L88 1772" fill="none" />
        <path d="M86 1785l-5 -26l14 3z" strokeWidth="1" />
      </g>
    </Plot>
  );
};

const kilo = (text) =>
  text.endsWith("K") ? parseFloat(text) * 1000 : Number(text);

const meter = (width, color, side = "right") =>
  `linear-gradient(to ${side}, ${color} ${width}px, transparent ${width}px)`;

const VolumeCell = ({ price, value, upper }) => {
  if (price === 21)
    return (
      <Cell $bg="#800000" $color="#e8dede">
        {value}
      </Cell>
    );
  const width = Math.round(kilo(value) * 0.00172);
  const bar = price !== 13.5 && width > 3;
  return (
    <Cell
      $bg={bar ? meter(width, upper ? "#ababab" : "#adadad") : undefined}
      $color={price === 13.5 ? "#f4f4f4" : undefined}
    >
      {value}
    </Cell>
  );
};

const DepthCell = ({ value, side }) => {
  const width = value && !value.endsWith("K") ? Math.round(value * 0.0255) : 0;
  const buy = side === "buy";
  return (
    <Cell
      $dark
      $align={buy ? "flex-end" : "flex-start"}
      $pad={buy ? "0 7px 0 0" : "0 0 0 6px"}
      $color="#ffffff"
      style={
        width
          ? {
              backgroundImage: buy
                ? meter(width, "#0080ff")
                : meter(width, "#ff0000", "left"),
            }
          : undefined
      }
    >
      {value}
    </Cell>
  );
};

const LadderPrice = ({ price }) => {
  if (DOM_TAGS[price])
    return (
      <Cell>
        <PriceTag $bg={LEVEL[DOM_TAGS[price]]}>{fraction(price)}</PriceTag>
      </Cell>
    );
  if (price === 20)
    return (
      <Cell>
        <LastPrice>{domPrice(price)}</LastPrice>
      </Cell>
    );
  return (
    <Cell $bg={price === 21 || price === 20.5 ? "#ffffff" : undefined}>
      {domPrice(price)}
    </Cell>
  );
};

const DepthLadder = () => (
  <LadderPane>
    <LadderClip>
      <Ladder>
        <thead>
          <LadderRow $upper>
            <HeadCell />
            <HeadCell />
            <HeadCell $dark $color="#5fe65f">
              Buy
            </HeadCell>
            <HeadCell />
            <HeadCell />
            <HeadCell $dark $color="#f06464">
              Sell
            </HeadCell>
          </LadderRow>
        </thead>
        <tbody>
          {range(57, 35, -0.5).map((price) => {
            const [vol, buy, bid, ask, sell] = DOM[price] || ["", "", "", "", ""];
            const upper = price >= 21;
            const rule = { 24.5: "#00a800", 12.5: "#d00000" }[price];
            return (
              <LadderRow key={price} $upper={upper} $rule={rule}>
                <VolumeCell price={price} value={vol} upper={upper} />
                <LadderPrice price={price} />
                <DepthCell value={buy} side="buy" />
                <Cell $color="#f02020">{bid}</Cell>
                <Cell $color="#104f94" $bg={price === 21 ? "#ffffff" : undefined}>
                  {ask}
                </Cell>
                <DepthCell value={sell} side="sell" />
              </LadderRow>
            );
          })}
        </tbody>
      </Ladder>
    </LadderClip>
    <LadderFoot>
      <span>102 L</span>
    </LadderFoot>
  </LadderPane>
);

const FootprintChart = () => (
  <ChartWindow
    title="30min Footprint ZNM24_FUT_CME[M]  30 Min  #5 L:1 | U.S. 10-Year T-Note - CBOT (Jun24)"
    margin="3px 1px 0"
    titleHeight={45}
    columns="minmax(0, 1fr) 507px"
  >
    <FootprintPlot />
    <ChartHeader $width="100%" $pad={2}>
      <HeaderLine>
        <Chip $bg="#808080" $color="#1c1c1c">
          Trade: 1@107 26.5/32
        </Chip>
        <Chip>ZNM24__FUT__CME[M]  30 Min  #5</Chip>
        <Chip $bg="#1f1f1f" $color="#c8c8c8">
          C: 107 20/32
        </Chip>
        <Chip>T: 21527</Chip>
        <Chip $bg="#00c800" $color="#c8e8c0">
          Chg: 1.5/32
        </Chip>
        <Chip $bg="#00c800" $color="#c8e8c0">
          DChg: 7/32
        </Chip>
        <Chip>
          2024-04-30 10:00:00 H: 107 22.5/32 L: 107 18/32 O: 107 18.5/32 V:
          107807 B: 107 20.5/32 A: 107 21/32 1748x595 0 BV: 50392
        </Chip>
      </HeaderLine>
      <HeaderLine>
        <Chip $bg="#808080" $color="#1c1c1c">
          DPL: 0/32P
        </Chip>
      </HeaderLine>
    </ChartHeader>
    <DepthLadder />
  </ChartWindow>
);

const TpoChart = () => {
  const yOf = (p) => Math.round(84 + (33.5 - p) * 41.18);
  const profileColor = { b: "#3a8fba", r: "#b4574f", g: "#8c8c8c" };
  const values = [
    [5, 131, 22],
    [16, 130, 15.5],
    [199, 345, 16.5],
    [211, 346, 13.5],
    [362, 418, 23],
    [362, 418, 18.5],
  ];
  const controls = [
    [62, 344, 19.5],
    [252, 418, 14],
    [373, 418, 20.5],
  ];
  const arrows = [
    [26, 14],
    [163, 17.5],
    [373, 21],
  ];
  return (
    <ChartWindow
      title="TPO Profile ZNM24_FUT_CME[M] #2 L:1 | U.S. ..."
      margin="0"
      titleHeight={36}
    >
      <Plot>
        <rect x="0" y={yOf(1)} width="419" height={1798 - yOf(1)} fill={YELLOW_ZONE} />
        <Dots xs={[128, 344]} box={[0, 28, 419, 1798]} dash="1 1" />
        <Dots ys={[909, 1320]} box={[0, 28, 419, 1798]} dash="1 1" />
        <g stroke="#800000" strokeWidth="3">
          <line x1="0" x2="418" y1="43" y2="43" />
          <line x1="0" x2="418" y1="990" y2="990" />
          {controls.map(([x1, x2, p]) => (
            <line key={p} x1={x1} x2={x2} y1={yOf(p)} y2={yOf(p)} />
          ))}
        </g>
        <g stroke="#004848" strokeWidth="3">
          {values.map(([x1, x2, p]) => (
            <line key={p} x1={x1} x2={x2} y1={yOf(p)} y2={yOf(p)} />
          ))}
        </g>
        {PROFILES.map(({ right, top, rows }) =>
          rows.split(" ").map((row, i) => (
            <rect
              key={`${right}-${i}`}
              x={right - Number(row.slice(1))}
              y={yOf(top - i * 0.5 + 0.25)}
              width={row.slice(1)}
              height="21"
              fill={profileColor[row[0]]}
            />
          ))
        )}
        <line x1="38" x2="420" y1={yOf(26)} y2={yOf(26)} stroke="#ff0000" strokeWidth="3" />
        <text x="3" y={yOf(26)} fill="#ff0000">
          2/8
        </text>
        <line x1="38" x2="420" y1={yOf(1)} y2={yOf(1)} stroke="#ffe800" strokeWidth="3" />
        <text x="3" y={yOf(1)} fill="#ffe800">
          1/8
        </text>
        <g fill="#00ffff">
          <rect x="128" y="774" width="3" height="124" />
          <rect x="343" y="569" width="3" height="225" />
        </g>
        <g fontSize="16" fill="#222">
          <text x="30" y="175">
            V:2132550
          </text>
          <text x="254" y="650">
            V:290421
          </text>
          <text x="332" y="423">
            V:297396
          </text>
        </g>
        <g fontSize="16">
          {TPO_ROWS.map(([x, p, letters, colors]) =>
            [...letters].map((letter, i) => {
              const color = TPO_COLORS[colors[i]];
              return (
                <text
                  key={`${x}-${p}-${i}`}
                  x={x + Math.round(i * 5.8)}
                  y={yOf(p)}
                  fill={color}
                  stroke={color}
                  strokeWidth="0.6"
                >
                  {letter}
                </text>
              );
            })
          )}
        </g>
        {arrows.map(([x, p]) => (
          <path key={x} d={`M${x} ${yOf(p)}l9 -8v16z`} fill="#ff0000" />
        ))}
        <path d="M439 0V1798H0" fill="none" stroke="#333" strokeWidth="2" />
        <AxisLabels x={439} prices={range(28, 33.5, -1.5)} yOf={yOf} color="#141414" />
        <AxisTag x={443} y={yOf(26)} text="107 26/32" bg="#ff0000" />
        <AxisTag x={443} y={yOf(21)} text="107 21/32" bg="#ffffff" color="#104f94" />
        <AxisTag x={443} y={yOf(1)} text="107 1/32" bg="#ffe800" />
        <line x1="128" x2="128" y1="1798" y2="1803" stroke="#333" />
        <line x1="344" x2="344" y1="1798" y2="1803" stroke="#333" />
        <TimeLabel x={182} y={1817} text="4-30  18:00" boxed />
        <TimeLabel x={387} y={1817} text="5-1  8:20" boxed />
        <rect x="506" y="1804" width="59" height="27" fill="#00c800" />
        <text x="535" y="1818" textAnchor="middle" fill="#124012">
          4 L E
        </text>
      </Plot>
      <ChartHeader $width="438px" $pad={5}>
        <HeaderLine>
          <Chip>TPO Profile</Chip>
          <Chip $bg="#000000" $color="#c8c8c8">
            C: 107 21/32
          </Chip>
          <Chip>T: 56735</Chip>
          <Chip $bg="#000000" $color="#c8c8c8">
            Chg: 0/32
          </Chip>
          <Chip $bg="#00c800" $color="#c8e8c0">
            DChg: 7/32
          </Chip>
        </HeaderLine>
      </ChartHeader>
    </ChartWindow>
  );
};

/* ---------- taskbar icons, all drawn on a 36px grid ---------- */

const Globe = ({ size }) => (
  <svg width={size} height={size} viewBox="0 0 36 36">
    <circle cx="18" cy="18" r="17" fill="#2374b8" />
    <path d="M5 8q8-9 18-6l-3 8-5 4 4 7-4 11Q4 27 4 16z" fill="#b5d52b" />
    <path d="M24 7q9 3 9 13-3 8-9 11l-4-11z" fill="#7fb52a" />
    <circle cx="13" cy="10" r="7" fill="#e8f5b0" opacity="0.6" />
  </svg>
);

const ICONS = [
  {
    name: "Task View",
    art: (
      <>
        <rect x="0" y="12" width="26" height="24" rx="2" fill="#2b2b2b" />
        <rect x="10" y="2" width="26" height="24" rx="2" fill="#f4f4f4" opacity="0.85" />
      </>
    ),
  },
  {
    name: "Teams",
    art: (
      <>
        <circle cx="21" cy="6" r="5" fill="#7b83eb" />
        <circle cx="31" cy="8" r="4" fill="#5059c9" />
        <path d="M13 13h17v14a8 8 0 0 1-17 0z" fill="#7b83eb" />
        <path d="M30 14h6v11a6 6 0 0 1-6 5z" fill="#5059c9" />
        <rect x="0" y="8" width="18" height="18" rx="2" fill="#f6f6ff" />
        <path d="M5 13h9M9.500 13v9" stroke="#4b53bc" strokeWidth="2.500" />
      </>
    ),
  },
  {
    name: "Control Panel",
    art: (
      <>
        <rect x="0" y="4" width="36" height="28" rx="2" fill="#4db4ec" />
        <rect x="2" y="6" width="32" height="24" fill="#a9def8" />
        <circle cx="13" cy="16" r="8" fill="#1c78c8" />
        <path d="M13 16v-8a8 8 0 0 1 8 8z" fill="#ff9a28" />
        <path d="M24 10h8M24 15h8M24 20h8" stroke="#fff" strokeWidth="3" />
        <path d="M5 27h14" stroke="#ff9a28" strokeWidth="3" />
        <path d="M21 27h10" stroke="#1c78c8" strokeWidth="3" />
      </>
    ),
  },
  { name: "Sierra Chart", open: true, globe: true },
  {
    name: "Notepad",
    open: true,
    art: (
      <>
        <rect x="4" y="3" width="28" height="27" rx="2" fill="#42bcdc" />
        <rect x="4" y="29" width="28" height="3" fill="#f2f2f2" />
        <rect x="4" y="32" width="28" height="4" fill="#b5541b" />
        <path d="M9 12h18M9 18h18M9 24h18" stroke="#0a6c8c" strokeWidth="2.500" />
        <path d="M8 0v5M13 0v5M18 0v5M23 0v5M28 0v5" stroke="#14647c" strokeWidth="2" />
      </>
    ),
  },
  {
    name: "Photos ring",
    art: (
      <g fill="none" strokeWidth="9">
        <path d="M18 6a12 12 0 0 1 12 12" stroke="#1ba548" />
        <path d="M30 16a12 12 0 0 1-12 14" stroke="#ffb400" />
        <path d="M20 30a12 12 0 0 1-14-12" stroke="#f0302c" />
        <path d="M6 20a12 12 0 0 1 12-14" stroke="#2c78e8" />
      </g>
    ),
  },
  {
    name: "Snipping Tool",
    art: (
      <>
        <rect x="1" y="1" width="26" height="27" rx="3" fill="#f4f4f4" />
        <path d="M5 5h18M6 4v18" stroke="#d43c1c" strokeWidth="3" strokeDasharray="4 2" />
        <path d="M22 10v20M12 20h18" stroke="#8a98a4" strokeWidth="3" />
        <circle cx="32" cy="19" r="3" fill="none" stroke="#28a0d8" strokeWidth="2" />
        <circle cx="20" cy="32" r="3" fill="none" stroke="#28a0d8" strokeWidth="2" />
      </>
    ),
  },
  {
    name: "File Explorer",
    art: (
      <>
        <path d="M1 5q0-2 2-2h9l4 4h18q2 0 2 2v8H1z" fill="#e8a413" />
        <path d="M1 10h35v22q0 2-2 2H3q-2 0-2-2z" fill="#ffd04a" />
        <path d="M7 34v-7q0-2 2-2h18q2 0 2 2v7z" fill="#1478d4" />
      </>
    ),
  },
  {
    name: "Excel",
    art: (
      <>
        <path d="M4 2h24l7 7v25H4z" fill="#f2f8f0" stroke="#62a855" />
        <path d="M18 14h15M18 20h15M18 26h15M25 12v20" stroke="#62a855" />
        <rect x="1" y="5" width="20" height="25" fill="#dff0dc" />
        <path d="M5 9l11 16M16 9L5 25" stroke="#1d8a3c" strokeWidth="4" />
      </>
    ),
  },
  {
    name: "Word",
    art: (
      <>
        <path d="M4 2h24l7 7v25H4z" fill="#f0f5fc" stroke="#5580c4" />
        <path d="M24 14h9M24 19h9M24 24h9M10 31h22" stroke="#5580c4" />
        <rect x="1" y="5" width="23" height="23" fill="#dde9f8" />
        <path d="M4 9l4 14 5-12 4 12 4-14" fill="none" stroke="#2157a8" strokeWidth="3" />
      </>
    ),
  },
  {
    name: "Chrome",
    open: true,
    art: (
      <>
        <circle cx="18" cy="18" r="17" fill="#fbc116" />
        <path d="M18 18L3.300 9.500A17 17 0 0 1 32.700 9.500L18 10z" fill="#e33b2e" />
        <path d="M3.300 9.500A17 17 0 0 0 18 35l7-13-7-4-7 4z" fill="#2ba24c" />
        <circle cx="18" cy="18" r="9" fill="#fff" />
        <circle cx="18" cy="18" r="7" fill="#2f7de9" />
      </>
    ),
  },
  {
    name: "Brave",
    art: (
      <>
        <path d="M10 0h16l4 4 3 1-1 6 1 4-5 14-10 7-10-7L3 15l1-4-1-6 3-1z" fill="#fb4a1e" />
        <path d="M18 8l5-1 5 6-4 6 1 4-7 6-7-6 1-4-4-6 5-6z" fill="#fff" />
        <path d="M12 14l4 2v4M24 14l-4 2v4M15 23h6" stroke="#fb4a1e" strokeWidth="2" fill="none" />
      </>
    ),
  },
  {
    name: "Discord",
    art: (
      <>
        <circle cx="18" cy="18" r="18" fill="#5865f2" />
        <path
          d="M11 11q7-3 14 0 4 6 4 13-3 2-6 2l-1-2h-8l-1 2q-3 0-6-2 0-7 4-13z"
          fill="#fff"
        />
        <circle cx="14" cy="19" r="2.500" fill="#5865f2" />
        <circle cx="22" cy="19" r="2.500" fill="#5865f2" />
      </>
    ),
  },
  {
    name: "Clover",
    art: (
      <>
        <rect x="0" y="0" width="36" height="36" rx="3" fill="#063d12" />
        <path
          d="M18 16L14 3l8 3zM20 17l12-6v8zM19 20l10 11-9 1zM16 20L8 32l-3-9zM16 17L4 15l4-7z"
          fill="#53c43a"
        />
      </>
    ),
  },
  {
    name: "OBS",
    open: true,
    art: (
      <>
        <circle cx="18" cy="18" r="16" fill="#1f1d20" stroke="#d8d8d8" strokeWidth="2" />
        <path
          d="M18 18q-7-3-5-11M18 18q7-5 12 2M18 18q-1 9-9 9"
          fill="none"
          stroke="#d8d8d8"
          strokeWidth="2.500"
        />
      </>
    ),
  },
  {
    name: "Skype",
    art: (
      <>
        <circle cx="14" cy="14" r="12" fill="#0a9be6" />
        <circle cx="22" cy="22" r="12" fill="#0a80d8" />
        <circle cx="18" cy="18" r="14" fill="#0a90e0" />
        <path
          d="M24 13q-2-3-6-3-5 0-5 4 0 3 5 4t5 4q0 4-5 4-4 0-6-3"
          fill="none"
          stroke="#fff"
          strokeWidth="3"
        />
      </>
    ),
  },
  {
    name: "Surfshark",
    open: true,
    art: (
      <>
        <path d="M15 0h19v20Q33 33 6 36V9q0-9 9-9z" fill="#178a9e" />
        <path
          d="M26 8q-8-1-8 5 0 3 2 5 2 8-6 10"
          fill="none"
          stroke="#fff"
          strokeWidth="4"
        />
      </>
    ),
  },
];

const Task = () => (
  <TaskBar>
    <Weather>
      <svg width="38" height="28" viewBox="0 0 38 28">
        <path
          d="M8 24a7 7 0 0 1 0-13q2-8 10-8 7 0 9 6 9 0 9 8 0 7-7 7z"
          fill="#9dc0f5"
        />
        <path d="M2 20q6-6 14-3 8-6 20 0 0 7-7 7H8q-5 0-6-4z" fill="#d3e4fb" />
      </svg>
      <div>
        <strong>73°F</strong>
        Cloudy
      </div>
    </Weather>
    <Apps>
      <button aria-label="Start">
        <svg width="35" height="36" viewBox="0 0 35 36">
          <path d="M0 1h17v17H0zM18 1h17v17H18z" fill="#2fb0f2" />
          <path d="M0 19h17v17H0zM18 19h17v17H18z" fill="#0a78d4" />
        </svg>
      </button>
      <SearchBox>
        <svg width="24" height="24" viewBox="0 0 24 24" fill="none" stroke="#222" strokeWidth="2">
          <circle cx="11" cy="10" r="8" />
          <path d="M16 16l7 7" />
        </svg>
        <input type="search" aria-label="Search" placeholder="Search" />
      </SearchBox>
      {ICONS.map(({ name, open, globe, art }) => (
        <AppButton key={name} aria-label={name} $open={open}>
          {globe ? (
            <Globe size={36} />
          ) : (
            <svg width="36" height="36" viewBox="0 0 36 36">
              {art}
            </svg>
          )}
        </AppButton>
      ))}
    </Apps>
    <Tray>
      <div>
        8:58 AM
        <br />
        5/1/2024
      </div>
      <svg width="38" height="36" viewBox="0 0 38 36">
        <path d="M8 3h13q4 0 5 5l-3 4H13l-4 18q-7 0-7-6 0-16 6-21z" fill="#2a8be0" />
        <path d="M26 8q8 0 8 6 0 14-7 18H14q-4 0-5-5h10l5-17z" fill="#e0589a" />
        <path d="M13 12h10l-4 15H9z" fill="#f7c23c" />
        <rect x="14" y="20" width="24" height="13" rx="3" fill="#1c2a6c" />
        <text x="26" y="30" textAnchor="middle" fontSize="10" fontWeight="bold" fill="#fff">
          PRE
        </text>
      </svg>
    </Tray>
  </TaskBar>
);

const toolSize = (label, state) =>
  label.includes("\n") || state === "small" ? 15 : 22;

const App = () => (
  <Screen>
    <GlobalStyle />
    <TitleBar>
      <Globe size={22} />
      <span>
        Sierra Chart 2626 Playbook-ZN_2252_v2363 Teton CME Order Routing
        {" 2024-05-01  13:58:13 Wed DF:15206437  ST:11, 11"}
      </span>
      <WindowKeys>
        <button aria-label="Minimize">
          <svg width="16" height="16" viewBox="0 0 16 16">
            <path d="M0 8h15" stroke="#888" strokeWidth="2" />
          </svg>
        </button>
        <button aria-label="Restore">
          <svg width="16" height="16" viewBox="0 0 16 16" fill="none" stroke="#888">
            <rect x="1" y="4" width="11" height="11" rx="2" />
            <path d="M4 1h8q3 0 3 3v8" />
          </svg>
        </button>
        <button aria-label="Close">
          <svg width="16" height="16" viewBox="0 0 16 16">
            <path d="M1 1l14 14M15 1L1 15" stroke="#888" strokeWidth="2" />
          </svg>
        </button>
      </WindowKeys>
    </TitleBar>
    <MenuBar>
      {MENU.map((item) => (
        <button key={item}>{item}</button>
      ))}
    </MenuBar>
    <ToolBar>
      <Status>DF:15206626  ST:11, 11  BR:603.20M</Status>
      {TOOLBAR.map((group, i) => (
        <ToolGroup key={i}>
          {group.map(([label, width, state]) => (
            <ToolButton
              key={label}
              $width={width}
              $state={state}
              $size={toolSize(label, state)}
            >
              {label}
            </ToolButton>
          ))}
        </ToolGroup>
      ))}
    </ToolBar>
    <TabStrip $height={45}>
      {BOOKS.map(([name, width]) => (
        <Tab key={name} $width={width} $active={name.includes("ZN_")}>
          {name}
        </Tab>
      ))}
    </TabStrip>
    <Desktop>
      <LeftStack>
        <DailyChart />
        <CandleChart />
      </LeftStack>
      <FootprintChart />
      <TpoChart />
    </Desktop>
    <TabStrip $height={46}>
      {SHEETS.map(([name, width]) => (
        <Tab key={name} $width={width} $size={22} $active={name === "30min Footprint"}>
          {name}
        </Tab>
      ))}
    </TabStrip>
    <Task />
  </Screen>
);

export default App;
